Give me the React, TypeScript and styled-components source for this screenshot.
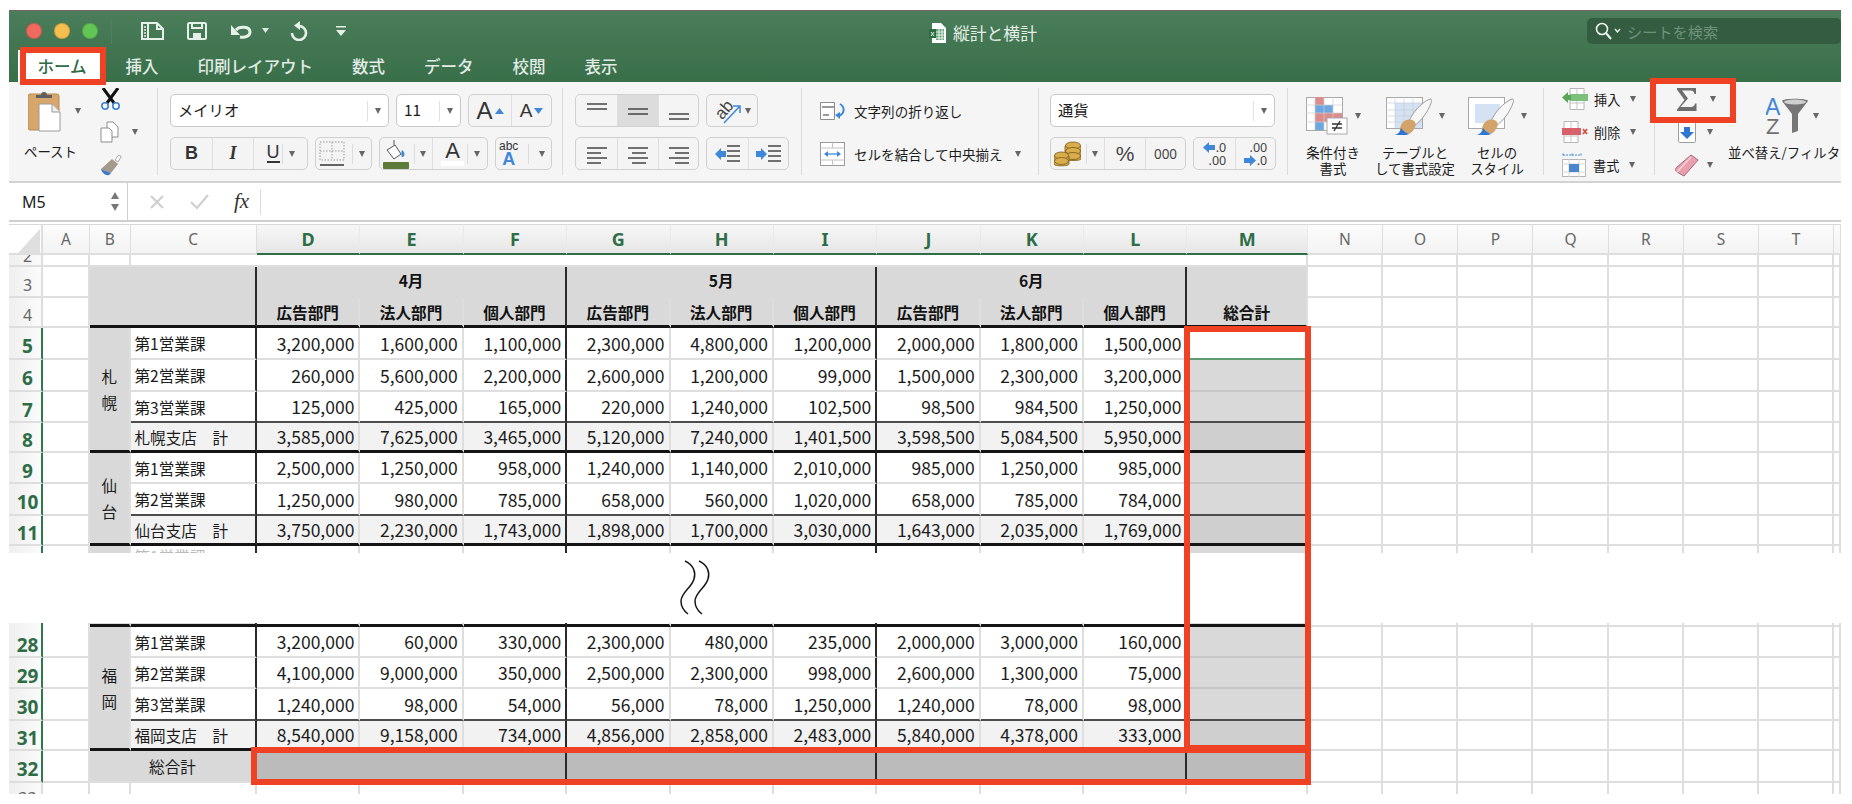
import { Fragment } from 'react';
import styled, { createGlobalStyle } from 'styled-components';

const CJK = `"Noto Sans CJK JP", "Noto Sans", sans-serif`;
const COLS = `34px 47px 40.5px 126.5px repeat(9, 103.39px) 120.5px repeat(7, 75.2px) 1fr`;

const GlobalStyle = createGlobalStyle`
  html, body {
    margin: 0;
    padding: 0;
    background: #fff;
    overflow: hidden;
  }
  * {
    box-sizing: border-box;
  }
`;

const Page = styled.div`
  position: relative;
  width: 1852px;
  height: 804px;
  padding: 10px 11px 0 9px;
  overflow: hidden;
  font-family: ${CJK};
  color: #1c1c1c;
`;

/* title bar + tabs */
const WindowHead = styled.header`
  background: linear-gradient(#4b7d5a, #386f49);
  border-top: 1px solid #7a6262;
`;

const TitleBar = styled.div`
  display: flex;
  align-items: center;
  height: 39px;
  padding-left: 17px;
`;

const Light = styled.span<{ $color: string }>`
  width: 16px;
  height: 16px;
  margin-right: 12px;
  border-radius: 50%;
  background: ${({ $color }) => $color};
  border: 1px solid rgba(0, 0, 0, 0.14);
`;

const QuickSep = styled.span`
  width: 1px;
  height: 26px;
  margin: 0 29px 0 1px;
  background: #4f8160;
`;

const QuickTools = styled.div`
  display: flex;
  align-items: center;
  width: 788px;
  gap: 23px;
`;

const UndoPair = styled.div`
  display: flex;
  align-items: center;
  gap: 10px;
`;

const RedoSlot = styled.span`
  display: flex;
  margin: 0 4px 0 -3px;
`;

const DocTitle = styled.div`
  display: flex;
  align-items: center;
  gap: 7px;
  margin-top: 4px;
  font-size: 16.8px;
  color: #e6eee8;
`;

const SearchBox = styled.div`
  display: flex;
  align-items: center;
  gap: 6px;
  width: 254px;
  height: 26px;
  margin-left: auto;
  padding-left: 8px;
  border-radius: 5px;
  background: #335c41;
  color: #6f927b;
  font-size: 15.2px;
`;

const TabBar = styled.nav`
  display: flex;
  height: 32px;
  padding-left: 9px;
`;

const Tab = styled.div<{ $active?: boolean }>`
  display: flex;
  align-items: center;
  padding: 0 19.5px 1px;
  font-size: 16.5px;
  font-weight: 500;
  white-space: nowrap;
  color: ${({ $active }) => ($active ? '#2f6b45' : '#e2ebe5')};
  background: ${({ $active }) => ($active ? '#fff' : 'transparent')};
`;

/* ribbon */
const Ribbon = styled.section`
  display: flex;
  height: 101px;
  background: #f5f5f5;
  border-bottom: 2px solid #d2d2d2;
`;

const Group = styled.div<{ $w: number; $pl: number }>`
  display: flex;
  flex: none;
  width: ${({ $w }) => $w}px;
  padding-left: ${({ $pl }) => $pl}px;
  overflow: hidden;
`;

const StackGroup = styled(Group)`
  flex-direction: column;
  gap: 10px;
  padding-top: 12px;
`;

const Sep = styled.span`
  flex: none;
  width: 1px;
  height: 87px;
  margin-top: 6px;
  background: #dcdcdc;
`;

const ControlRow = styled.div`
  display: flex;
  gap: 7px;
  height: 33px;
`;

const Caret = styled.span<{ $ml?: number }>`
  flex: none;
  width: 0;
  height: 0;
  margin-left: ${({ $ml }) => $ml ?? 0}px;
  border-left: 3.5px solid transparent;
  border-right: 3.5px solid transparent;
  border-top: 6px solid #666;
`;

const PasteBlock = styled.div`
  display: flex;
  flex-direction: column;
  width: 57px;
  padding-top: 8px;
`;

const PasteTop = styled.div`
  display: flex;
  align-items: center;
  padding-left: 4px;
`;

const ToolLabel = styled.div`
  font-size: 13.4px;
  line-height: 16px;
  white-space: nowrap;
`;

const PasteLabel = styled(ToolLabel)`
  margin-top: 11px;
`;

const SmallTools = styled.div`
  display: flex;
  flex-direction: column;
  gap: 11px;
  margin-left: 19px;
  padding-top: 6px;
`;

const SmallTool = styled.div`
  display: flex;
  align-items: center;
  height: 22px;
`;

const SelectBox = styled.div<{ $w: number }>`
  display: flex;
  align-items: center;
  width: ${({ $w }) => $w}px;
  padding-left: 7px;
  border: 1px solid #c9c9c9;
  border-radius: 5px;
  background: #fff;
  font-size: 15.3px;
`;

const SelectText = styled.span`
  flex: 1;
  padding-bottom: 3px;
  white-space: nowrap;
`;

const SelectArrow = styled.span`
  display: flex;
  align-items: center;
  justify-content: center;
  width: 21px;
  height: 20px;
  border-left: 1px solid #dfdfdf;
`;

const Seg = styled.div`
  display: flex;
  border: 1px solid #d0d0d0;
  border-radius: 5px;
  background: #f4f4f4;
  overflow: hidden;
`;

const Part = styled.div<{ $w: number; $on?: boolean; $first?: boolean }>`
  display: flex;
  align-items: center;
  justify-content: center;
  gap: 2px;
  flex: none;
  width: ${({ $w }) => $w}px;
  border-left: ${({ $first }) => ($first ? 'none' : '1px solid #dedede')};
  background: ${({ $on }) => ($on ? '#dcdcdc' : 'transparent')};
  font-size: 16px;
`;

const Tick = styled.span`
  flex: none;
  width: 1px;
  height: 20px;
  background: #dcdcdc;
`;

const ArrowPart = styled.div<{ $w: number }>`
  display: flex;
  align-items: center;
  justify-content: space-between;
  flex: none;
  width: ${({ $w }) => $w}px;
  padding: 0 6px 0 3px;
`;

const BigA = styled.span<{ $size: number }>`
  font-family: "Liberation Sans", sans-serif;
  font-size: ${({ $size }) => $size}px;
  line-height: 1;
  color: #333;
`;

const BoldGlyph = styled.span`
  font-family: "Liberation Sans", sans-serif;
  font-size: 18px;
  font-weight: 700;
  color: #333;
`;

const ItalicGlyph = styled(BoldGlyph)`
  font-family: "Liberation Serif", serif;
  font-style: italic;
`;

const UnderGlyph = styled(BoldGlyph)`
  font-weight: 400;
  border-bottom: 2px solid #333;
  line-height: 17px;
`;

const ColorA = styled.span`
  display: flex;
  flex-direction: column;
  align-items: center;
  width: 24px;
  font-family: "Liberation Sans", sans-serif;
  font-size: 22px;
  line-height: 20px;
  color: #333;

  &::after {
    content: '';
    width: 23px;
    height: 5px;
    background: #fff;
  }
`;

const AbcStack = styled.span`
  display: flex;
  flex-direction: column;
  align-items: center;
  font-family: "Liberation Sans", sans-serif;
  font-size: 12px;
  line-height: 11px;
  color: #333;

  b {
    font-size: 18px;
    line-height: 15px;
    color: #3f87d8;
  }
`;

const WrapRow = styled.div`
  display: flex;
  align-items: center;
  height: 33px;
  gap: 6px;
  font-size: 13.55px;
  white-space: nowrap;
`;

const MergeRow = styled(WrapRow)`
  gap: 9px;
`;

const Percent = styled.span`
  font-family: "Liberation Sans", sans-serif;
  font-size: 21px;
  color: #444;
`;

const Thousand = styled.span`
  font-family: "Noto Sans", sans-serif;
  font-size: 13.5px;
  color: #444;
`;

const DecStack = styled.span`
  display: flex;
  flex-direction: column;
  align-items: flex-end;
  font-family: "Noto Sans", sans-serif;
  font-size: 12.5px;
  line-height: 13px;
  color: #444;
`;

const DecLine = styled.span`
  display: flex;
  align-items: center;
  gap: 1px;
`;

const StyleGroup = styled(Group)`
  padding-top: 15px;
`;

const StyleItem = styled.div`
  display: flex;
  flex-direction: column;
  align-items: center;
  width: 82px;
`;

const StyleTop = styled.div`
  display: flex;
  align-items: center;
  gap: 7px;
  height: 38px;
  margin-bottom: 9px;
`;

const CenterLabel = styled(ToolLabel)`
  text-align: center;
`;

const CellTools = styled.div`
  display: flex;
  flex-direction: column;
  gap: 11px;
  padding-top: 6px;
`;

const CellTool = styled.div`
  display: flex;
  align-items: center;
  height: 22px;
  font-size: 13.2px;
`;

const CellToolName = styled.span`
  width: 26px;
  margin: 0 10px 0 6px;
  white-space: nowrap;
`;

const EditTools = styled(CellTools)`
  width: 41px;
  flex: none;
`;

const EditIconSlot = styled.span`
  display: flex;
  justify-content: center;
  width: 24px;
  margin-right: 8px;
`;

const SortBlock = styled.div`
  width: 113px;
  margin-left: 12px;
  padding-top: 15px;
  flex: none;
  overflow: hidden;
`;

const SortTop = styled.div`
  display: flex;
  align-items: center;
  gap: 5px;
  height: 38px;
  margin: 0 0 9px 38px;
`;

/* formula bar */
const FormulaBar = styled.div`
  display: flex;
  align-items: center;
  height: 39px;
  margin-bottom: 2px;
  border-bottom: 2px solid #cfcfcf;
  background: #fff;
`;

const NameBox = styled.div`
  display: flex;
  align-items: center;
  justify-content: space-between;
  width: 119px;
  height: 37px;
  padding: 0 8px 0 13px;
  border-right: 1px solid #cfcfcf;
  font-family: "Noto Sans", sans-serif;
  font-size: 16px;
`;

const Stepper = styled.div`
  display: flex;
  flex-direction: column;
  gap: 5px;
`;

const StepUp = styled.span`
  border-left: 4.5px solid transparent;
  border-right: 4.5px solid transparent;
  border-bottom: 7px solid #777;
`;

const StepDown = styled.span`
  border-left: 4.5px solid transparent;
  border-right: 4.5px solid transparent;
  border-top: 7px solid #777;
`;

const FormulaTools = styled.div`
  display: flex;
  align-items: center;
  gap: 25px;
  width: 133px;
  height: 26px;
  padding-left: 21px;
  border-right: 1px solid #dcdcdc;
`;

const FxMark = styled.span`
  font-family: "Liberation Serif", serif;
  font-style: italic;
  font-size: 21px;
  color: #333;
`;

/* sheet */
const ColumnHead = styled.div`
  display: grid;
  grid-template-columns: ${COLS};
  height: 31px;
`;

const Corner = styled.div`
  display: flex;
  align-items: flex-end;
  padding: 0 0 0 9px;
  border-top: 1px solid #d8d8d8;
  border-right: 2px solid #dedede;
  border-bottom: 2px solid #dedede;
`;

const CornerMark = styled.span`
  width: 22px;
  height: 24px;
  background: #dfdfdf;
  clip-path: polygon(100% 0, 100% 100%, 0 100%);
`;

const ColLetter = styled.div<{ $active?: boolean }>`
  display: flex;
  align-items: center;
  justify-content: center;
  overflow: hidden;
  font-family: "Noto Sans", sans-serif;
  font-size: ${({ $active }) => ($active ? '18px' : '15.5px')};
  font-weight: ${({ $active }) => ($active ? 700 : 400)};
  color: ${({ $active }) => ($active ? '#2e6d46' : '#666')};
  background: ${({ $active }) => ($active ? 'linear-gradient(#f7f7f7, #e6e6e6)' : 'linear-gradient(#fcfcfc, #f3f3f3)')};
  border-top: 1px solid #d8d8d8;
  border-right: 1px solid ${({ $active }) => ($active ? '#e9e9e9' : '#dedede')};
  border-bottom: 2px solid ${({ $active }) => ($active ? '#2e6d46' : '#dedede')};
`;

const SheetGrid = styled.div<{ $rows: string }>`
  display: grid;
  grid-template-columns: ${COLS};
  grid-template-rows: ${({ $rows }) => $rows};
`;

type Line = 'grid' | 'soft' | 'thin' | 'thick' | 'select' | 'none';

const lineStyle = (line: Line = 'grid') => {
  switch (line) {
    case 'thick':
      return '3px solid #141414';
    case 'thin':
      return '2px solid #4c4c4c';
    case 'soft':
      return '2px solid #c6c6c6';
    case 'select':
      return '2px solid #5d9c70';
    case 'none':
      return 'none';
    default:
      return '2px solid #dedede';
  }
};

const RowHead = styled.div<{ $active?: boolean; $line?: Line; $clip?: 'top' | 'bottom' }>`
  display: flex;
  align-items: ${({ $clip }) => ($clip === 'bottom' ? 'flex-end' : $clip === 'top' ? 'flex-start' : 'center')};
  justify-content: center;
  overflow: hidden;
  font-family: "Noto Sans", sans-serif;
  font-size: ${({ $active }) => ($active ? '19px' : '16px')};
  font-weight: ${({ $active }) => ($active ? 700 : 400)};
  line-height: 18px;
  padding: ${({ $clip }) => ($clip === 'bottom' ? '0' : '6px')} 0 0 5px;
  color: ${({ $active }) => ($active ? '#2e6d46' : '#666')};
  background: linear-gradient(90deg, #efefef, #fbfbfb);
  border-bottom: ${({ $line }) => lineStyle($line)};
  border-right: 2px solid ${({ $active }) => ($active ? '#2e7a4b' : '#dedede')};
`;

const Cell = styled.div<{
  $fill?: string;
  $line?: Line;
  $edge?: boolean;
  $colSpan?: number;
  $rowSpan?: number;
}>`
  display: flex;
  align-items: center;
  min-width: 0;
  overflow: hidden;
  background: ${({ $fill }) => $fill ?? '#fff'};
  border-bottom: ${({ $line }) => lineStyle($line)};
  border-right: ${({ $edge }) => ($edge ? '2px solid #2a2a2a' : '2px solid #dedede')};
  grid-column: ${({ $colSpan }) => ($colSpan ? `span ${$colSpan}` : 'auto')};
  grid-row: ${({ $rowSpan }) => ($rowSpan ? `span ${$rowSpan}` : 'auto')};
`;

const HeaderCell = styled(Cell)`
  justify-content: center;
  font-size: 15.6px;
  font-weight: 700;
  color: #111;
`;

const MonthCell = styled(HeaderCell)`
  padding-bottom: 6px;
`;

const LabelCell = styled(Cell)`
  padding-left: 4px;
  font-size: 15.6px;
  white-space: pre;
`;

const ClipLabelCell = styled(LabelCell)`
  align-items: flex-start;
  line-height: 20px;
  color: #bbb;
`;

const NumCell = styled(Cell)`
  justify-content: flex-end;
  padding-right: 4px;
  font-size: 17.5px;
  white-space: nowrap;
`;

const RegionCell = styled(Cell)`
  flex-direction: column;
  justify-content: center;
  font-size: 15.6px;
  line-height: 26px;
`;

const TotalLabel = styled(Cell)`
  justify-content: center;
  font-size: 15.6px;
`;

const BreakBand = styled.div`
  height: 70px;
  padding: 6px 0 0 671px;
`;

/* red annotation boxes lying over the app */
const Mark = styled.div`
  position: absolute;
  border: 6px solid #ef4123;
  pointer-events: none;
`;

const HomeMark = styled(Mark)`
  left: 20px;
  top: 47px;
  width: 86px;
  height: 38px;
`;

const SumMark = styled(Mark)`
  left: 1650px;
  top: 78px;
  width: 86px;
  height: 45px;
`;

const TotalColumnMark = styled(Mark)`
  left: 1184px;
  top: 326px;
  width: 127px;
  height: 425px;
`;

const TotalRowMark = styled(Mark)`
  left: 251px;
  top: 747px;
  width: 1060px;
  height: 38px;
`;

/* ---------- icons ---------- */
const SidebarIcon = () => (
  <svg width="23" height="18" viewBox="0 0 23 18" fill="none" stroke="#e8f0ea" strokeWidth="2">
    <path d="M1 1h15l6 6v10H1z" />
    <path d="M7 1v16M16 1v6h6" />
    <path d="M3 5h2M3 8h2M3 11h2M3 14h2" strokeWidth="1.4" />
  </svg>
);

const SaveIcon = () => (
  <svg width="20" height="18" viewBox="0 0 20 18" fill="none" stroke="#e8f0ea" strokeWidth="2">
    <rect x="1" y="1" width="18" height="16" rx="1.5" />
    <path d="M5 1v5h10V1" />
    <path d="M6 17v-6h8v6" fill="#e8f0ea" stroke="none" />
  </svg>
);

const UndoIcon = () => (
  <svg width="22" height="16" viewBox="0 0 22 16" fill="none">
    <path d="M1 2v10h9z" fill="#e8f0ea" />
    <path d="M6 7c3-4 14-4 14 2 0 4-5 6-10 5" stroke="#e8f0ea" strokeWidth="3" />
  </svg>
);

const RedoIcon = () => (
  <svg width="19" height="20" viewBox="0 0 19 20" fill="none">
    <path d="M10 5a7 7 0 1 1-7 7" stroke="#e8f0ea" strokeWidth="2.6" />
    <path d="M11 0v9L5 4.500z" fill="#e8f0ea" />
  </svg>
);

const CustomizeIcon = () => (
  <svg width="12" height="12" viewBox="0 0 12 12">
    <path d="M1 1h10v1.6H1zM1 5h10L6 11z" fill="#e8f0ea" />
  </svg>
);

const MiniCaret = () => (
  <svg width="7" height="5" viewBox="0 0 7 5">
    <path d="M0 0h7L3.5 5z" fill="#dfe9e2" />
  </svg>
);

const FileIcon = () => (
  <svg width="17" height="20" viewBox="0 0 17 20">
    <path d="M3 0h9l5 5v15H3z" fill="#fff" />
    <path d="M7 6h8v11H7z" fill="#6aa37d" />
    <path d="M7 9h8M7 12h8M7 15h8M10 6v11M13 6v11" stroke="#fff" strokeWidth=".8" />
    <rect x="0" y="6" width="7" height="9" fill="#2d6b44" />
    <path d="M2 9l3 4M5 9l-3 4" stroke="#fff" strokeWidth=".9" />
  </svg>
);

const SearchIcon = () => (
  <svg width="26" height="18" viewBox="0 0 26 18" fill="none" stroke="#f0f5f1">
    <circle cx="7" cy="7" r="5.5" strokeWidth="1.6" />
    <path d="M11 11l5 6" strokeWidth="2" />
    <path d="M20 7l2.5 3L25 7" strokeWidth="1.4" />
  </svg>
);

const ClipboardIcon = () => (
  <svg width="33" height="42" viewBox="0 0 33 42">
    <rect x="0" y="4" width="31" height="36" rx="2" fill="#d7a66b" stroke="#b78d5b" />
    <path d="M8 8V5h5a3 3 0 0 1 6 0h5v3z" fill="#5f5f5f" />
    <path d="M11 14h13l8 8v19H11z" fill="#fff" stroke="#9a9a9a" />
    <path d="M24 14v8h8" fill="#eee" stroke="#9a9a9a" />
  </svg>
);

const ScissorsIcon = () => (
  <svg width="21" height="22" viewBox="0 0 21 22" fill="none">
    <path d="M3 0l11 15M18 0L7 15" stroke="#111" strokeWidth="3" />
    <circle cx="5" cy="18" r="3.2" stroke="#3b7fd1" strokeWidth="1.6" />
    <circle cx="16" cy="18" r="3.2" stroke="#3b7fd1" strokeWidth="1.6" />
  </svg>
);

const CopyIcon = () => (
  <svg width="19" height="22" viewBox="0 0 19 22" fill="#fff" stroke="#8d8d8d">
    <path d="M7 1h6l5 5v10H7z" />
    <path d="M1 7h8l3 3v11H1z" />
  </svg>
);

const FormatBrushIcon = () => (
  <svg width="23" height="22" viewBox="0 0 23 22">
    <path d="M15 6l3-4c1-1.400 3-.4 3 1l-3 5z" fill="#fff" stroke="#a5a5a5" />
    <path d="M1 15L12 5l6 5-7 9z" fill="#a39a8c" />
    <path d="M1 15l10 4-2 2c-3 1-7-2-8-6z" fill="#3f78c4" />
  </svg>
);

const BorderIcon = () => (
  <svg width="26" height="26" viewBox="0 0 26 26" fill="none" stroke="#9c9c9c">
    <path d="M1 1h24v18H1zM13 1v18M1 10h24" strokeDasharray="1.5 1.5" />
    <path d="M1 24h24" stroke="#333" strokeWidth="1.6" />
  </svg>
);

const FillIcon = () => (
  <svg width="26" height="30" viewBox="0 0 26 30">
    <path d="M4 11l8-5 6 9-7 5z" fill="#fff" stroke="#555" />
    <path d="M11 6V1" stroke="#555" fill="none" />
    <path d="M19 11c3 2 3 6 1 7s-2-4-1-7z" fill="#3f87d8" />
    <rect x="0" y="23" width="26" height="7" rx="1" fill="#5d7a3a" />
  </svg>
);

const AlignLines = ({ kind }: { kind: 'top' | 'mid' | 'low' }) => {
  const y = kind === 'top' ? 3 : kind === 'mid' ? 8 : 13;
  return (
    <svg width="22" height="20" viewBox="0 0 22 20" stroke="#444" strokeWidth="1.6">
      <path d={`M1 ${y}h20M1 ${y + 5}h20`} />
    </svg>
  );
};

const TextLines = ({ kind }: { kind: 'left' | 'center' | 'right' }) => {
  const start = kind === 'left' ? 1 : kind === 'center' ? 5 : 7;
  return (
    <svg width="22" height="20" viewBox="0 0 22 20" stroke="#444" strokeWidth="1.5">
      <path d={`M1 4h20M${start} 9h14M1 14h20M${start} 19h14`} />
    </svg>
  );
};

const OrientIcon = () => (
  <svg width="30" height="29" viewBox="0 0 30 29">
    <text x="1" y="19" fontFamily="Liberation Sans" fontSize="17" fill="#444" transform="rotate(-50 11 13)">
      ab
    </text>
    <path d="M11 27L26 11M20 10h7v7" fill="none" stroke="#3f87d8" strokeWidth="1.5" />
  </svg>
);

const IndentIcon = ({ out }: { out?: boolean }) => (
  <svg width="26" height="20" viewBox="0 0 26 20">
    <path d="M12 2h13M12 7h13M12 12h13M12 17h13" stroke="#444" strokeWidth="1.5" />
    <path d={out ? 'M0 10l6-6v3h5v6H6v3z' : 'M11 10L5 4v3H0v6h5v3z'} fill="#3f87d8" />
  </svg>
);

const WrapIcon = () => (
  <svg width="28" height="18" viewBox="0 0 28 18" fill="none">
    <path d="M.5 .5h14v17H.5z" fill="#fff" stroke="#8d8d8d" />
    <path d="M2 5h12M3 13h6" stroke="#333" strokeWidth="1.2" />
    <path d="M20 2c5 3 5 9-1 12" stroke="#3f87d8" strokeWidth="2" />
    <path d="M15 13l5-3v7z" fill="#3f87d8" />
  </svg>
);

const MergeIcon = () => (
  <svg width="25" height="24" viewBox="0 0 25 24" fill="none">
    <rect x=".5" y=".5" width="24" height="23" fill="#fff" stroke="#9a9a9a" />
    <path d="M.5 6h24M.5 18h24M12.500 .5V6M12.500 18v5.500" stroke="#c2c2c2" />
    <path d="M6 12h13" stroke="#3f87d8" strokeWidth="1.3" />
    <path d="M4 12l4-3v6zM21 12l-4-3v6z" fill="#3f87d8" />
  </svg>
);

const CoinsIcon = () => (
  <svg width="27" height="26" viewBox="0 0 27 26" stroke="#7a5a1c" strokeWidth=".8" fill="#d9ad4c">
    <path d="M11 5v13c0 2 16 2 16 0V5z" />
    <ellipse cx="19" cy="4.5" rx="7.5" ry="3.5" />
    <ellipse cx="19" cy="10" rx="7.5" ry="3.5" />
    <ellipse cx="19" cy="15" rx="7.5" ry="3.5" />
    <path d="M0 15v8c0 2.500 15 2.500 15 0v-8z" />
    <ellipse cx="7.5" cy="14.5" rx="7" ry="3.5" />
    <ellipse cx="7.5" cy="20" rx="7" ry="3.5" />
  </svg>
);

const BlueArrow = ({ right }: { right?: boolean }) => (
  <svg width="12" height="11" viewBox="0 0 12 11">
    <path d={right ? 'M12 5.5L6 0v3H0v5h6v3z' : 'M0 5.5L6 0v3h6v5H6v3z'} fill="#3f87d8" />
  </svg>
);

const ConditionIcon = () => (
  <svg width="42" height="38" viewBox="0 0 42 38" fill="none">
    <rect x=".5" y=".5" width="36" height="33" fill="#fff" stroke="#a8a8a8" />
    <path d="M9 0h9v8H9z" fill="#dd8c8c" />
    <path d="M9 8h18v8H9z" fill="#6ea6e2" />
    <path d="M9 16h27v9H9z" fill="#dd8c8c" />
    <path d="M9 25h9v8H9z" fill="#6ea6e2" />
    <path d="M0 8h36M0 16h36M0 25h36M9 0v33M18 0v33M27 0v33" stroke="#cfcfcf" strokeWidth=".7" />
    <rect x="21" y="21" width="20" height="16" fill="#fff" stroke="#a8a8a8" />
    <path d="M26 27h10M26 31h10M34 24l-6 10" stroke="#333" strokeWidth="1.3" />
  </svg>
);

const PaintBrush = () => (
  <g>
    <path d="M23 24C27 15 36 5 44 2c2 0 2 2 1 4-3 9-10 18-17 23z" fill="#f7f7f7" stroke="#9d9d9d" />
    <path d="M14 33c0-7 6-12 12-10 4 1 5 5 2 9-1 2-3 4-5 5z" fill="#d2a36a" />
    <path d="M9 38c3-1 5-3 6-7 2 3 5 5 8 6-4 2-10 2-14 1z" fill="#2f76d2" />
  </g>
);

const TableStyleIcon = () => (
  <svg width="46" height="38" viewBox="0 0 46 38" fill="none">
    <rect x=".5" y=".5" width="36" height="31" fill="#fff" stroke="#a8a8a8" />
    <rect x="9" y="6" width="27" height="25" fill="#d4e2f3" />
    <path d="M0 6h36M0 13h36M0 19h36M0 25h36M9 0v31M18 0v31M27 0v31" stroke="#c6cfd9" strokeWidth=".7" />
    <PaintBrush />
  </svg>
);

const CellStyleIcon = () => (
  <svg width="46" height="38" viewBox="0 0 46 38" fill="none">
    <rect x=".5" y=".5" width="36" height="31" fill="#fff" stroke="#a8a8a8" />
    <rect x="7" y="7" width="25" height="19" fill="#d4e2f3" />
    <PaintBrush />
  </svg>
);

const InsertIcon = () => (
  <svg width="26" height="22" viewBox="0 0 26 22" fill="none">
    <path d="M8 .5h14v21H8z" fill="#fff" stroke="#b4b4b4" />
    <path d="M15 0v22M8 15h14" stroke="#c6c6c6" />
    <rect x="8" y="6" width="18" height="7" fill="#7cc07c" />
    <path d="M0 9.500L6 4v3h3v5H6v3z" fill="#5aa75a" />
  </svg>
);

const DeleteIcon = () => (
  <svg width="26" height="22" viewBox="0 0 26 22" fill="none">
    <path d="M2 .5h14v21H2z" fill="#fff" stroke="#b4b4b4" />
    <path d="M9 0v22M2 15h14" stroke="#c6c6c6" />
    <rect x="0" y="7" width="19" height="7" fill="#d8606a" />
    <path d="M21 8l4 5M25 8l-4 5" stroke="#d8503f" strokeWidth="1.8" />
  </svg>
);

const FormatIcon = () => (
  <svg width="25" height="24" viewBox="0 0 25 24" fill="none">
    <path d="M1 2h18M1 .5v3M19 .5v3M10 .5v3" stroke="#3f87d8" strokeWidth="1" strokeDasharray="2 1" />
    <rect x=".5" y="6.500" width="23" height="17" fill="#fff" stroke="#b4b4b4" />
    <path d="M0 11h24M0 19h24M7 6v18M17 6v18" stroke="#d4d4d4" />
    <rect x="7" y="11" width="10" height="8" fill="#4a86cf" />
  </svg>
);

const SumIcon = () => (
  <svg width="20" height="23" viewBox="0 0 20 23">
    <path d="M0 0h19v6h-1.500c-.5-2-1.500-3.500-4-3.500H5L11 10.500 3.500 19H14c2.500 0 3.500-1.500 4-3.500h1.500V23H0v-1.500L7.500 12 0 1.500z" fill="#6e6e6e" />
  </svg>
);

const FillDownIcon = () => (
  <svg width="18" height="21" viewBox="0 0 18 21">
    <rect x=".5" y=".5" width="17" height="20" rx="1" fill="#fff" stroke="#9c9c9c" />
    <path d="M6 5h6v5h4l-7 7-7-7h4z" fill="#2f76d2" />
  </svg>
);

const EraserIcon = () => (
  <svg width="24" height="23" viewBox="0 0 24 23">
    <path d="M16 1l7 5L9 22l-7-4c-2-2-2-3 0-5z" fill="#e8a0ae" stroke="#a96478" />
    <path d="M2 18l14-15" stroke="#f6d2d9" strokeWidth="1.5" />
  </svg>
);

const SortIcon = () => (
  <svg width="42" height="36" viewBox="0 0 42 36">
    <text x="-1" y="17" fontFamily="Liberation Sans" fontSize="23" fill="#3f87d8">
      A
    </text>
    <text x="0" y="36" fontFamily="Liberation Sans" fontSize="22" fill="#707070">
      Z
    </text>
    <path d="M16 3c0-3 26-3 26 0L32 16v17l-6 2V16z" fill="#767676" />
    <ellipse cx="29" cy="4" rx="11" ry="2.500" fill="#cfcfcf" />
  </svg>
);

const BreakSquiggle = () => (
  <svg width="32" height="58" viewBox="0 0 32 58" fill="none" stroke="#161616" strokeWidth="1.5">
    <path d="M5 2c9 4 11 12 9 18-2 8-13 14-13 22 0 6 3 10 7 13" />
    <path d="M19 2c9 4 11 12 9 18-2 8-13 14-13 22 0 6 3 10 7 13" />
  </svg>
);

const XMark = () => (
  <svg width="16" height="16" viewBox="0 0 16 16" stroke="#cfcfcf" strokeWidth="2.2">
    <path d="M2 2l12 12M14 2L2 14" />
  </svg>
);

const CheckMark = () => (
  <svg width="19" height="16" viewBox="0 0 19 16" fill="none" stroke="#cfcfcf" strokeWidth="2.2">
    <path d="M1 8l6 6L18 1" />
  </svg>
);

/* ---------- data ---------- */
const COLUMN_LETTERS = 'A B C D E F G H I J K L M N O P Q R S T'.split(' ');
const ACTIVE_COLUMNS = 'DEFGHIJKLM';
const MONTHS = ['4月', '5月', '6月'];
const DEPARTMENTS = ['広告部門', '法人部門', '個人部門'];

type DataRow = {
  no: number;
  label: string;
  values: string[];
  subtotal?: boolean;
  line: Line;
  region?: string[];
  selected?: boolean;
};

const TOP_ROWS: DataRow[] = [
  {
    no: 5,
    label: '第1営業課',
    region: ['札', '幌'],
    selected: true,
    line: 'grid',
    values: ['3,200,000', '1,600,000', '1,100,000', '2,300,000', '4,800,000', '1,200,000', '2,000,000', '1,800,000', '1,500,000'],
  },
  {
    no: 6,
    label: '第2営業課',
    line: 'grid',
    values: ['260,000', '5,600,000', '2,200,000', '2,600,000', '1,200,000', '99,000', '1,500,000', '2,300,000', '3,200,000'],
  },
  {
    no: 7,
    label: '第3営業課',
    line: 'thin',
    values: ['125,000', '425,000', '165,000', '220,000', '1,240,000', '102,500', '98,500', '984,500', '1,250,000'],
  },
  {
    no: 8,
    label: '札幌支店　計',
    subtotal: true,
    line: 'thick',
    values: ['3,585,000', '7,625,000', '3,465,000', '5,120,000', '7,240,000', '1,401,500', '3,598,500', '5,084,500', '5,950,000'],
  },
  {
    no: 9,
    label: '第1営業課',
    region: ['仙', '台'],
    line: 'grid',
    values: ['2,500,000', '1,250,000', '958,000', '1,240,000', '1,140,000', '2,010,000', '985,000', '1,250,000', '985,000'],
  },
  {
    no: 10,
    label: '第2営業課',
    line: 'thin',
    values: ['1,250,000', '980,000', '785,000', '658,000', '560,000', '1,020,000', '658,000', '785,000', '784,000'],
  },
  {
    no: 11,
    label: '仙台支店　計',
    subtotal: true,
    line: 'thick',
    values: ['3,750,000', '2,230,000', '1,743,000', '1,898,000', '1,700,000', '3,030,000', '1,643,000', '2,035,000', '1,769,000'],
  },
];

const BOTTOM_ROWS: DataRow[] = [
  {
    no: 28,
    label: '第1営業課',
    region: ['福', '岡'],
    line: 'grid',
    values: ['3,200,000', '60,000', '330,000', '2,300,000', '480,000', '235,000', '2,000,000', '3,000,000', '160,000'],
  },
  {
    no: 29,
    label: '第2営業課',
    line: 'grid',
    values: ['4,100,000', '9,000,000', '350,000', '2,500,000', '2,300,000', '998,000', '2,600,000', '1,300,000', '75,000'],
  },
  {
    no: 30,
    label: '第3営業課',
    line: 'thin',
    values: ['1,240,000', '98,000', '54,000', '56,000', '78,000', '1,250,000', '1,240,000', '78,000', '98,000'],
  },
  {
    no: 31,
    label: '福岡支店　計',
    subtotal: true,
    line: 'thick',
    values: ['8,540,000', '9,158,000', '734,000', '4,856,000', '2,858,000', '2,483,000', '5,840,000', '4,378,000', '333,000'],
  },
];

const HEADER_GRAY = '#d9d9d9';
const SUBTOTAL = '#f2f2f2';

const BlankCells = ({ count = 8, line }: { count?: number; line?: Line }) => (
  <>
    {Array.from({ length: count }, (_, i) => (
      <Cell key={i} $line={line} />
    ))}
  </>
);

const SheetRow = ({ row, regionSpan }: { row: DataRow; regionSpan: number }) => {
  const fill = row.subtotal ? SUBTOTAL : undefined;
  const totalFill = row.selected ? '#fff' : row.subtotal ? '#cfcfcf' : HEADER_GRAY;
  const totalLine: Line = row.selected ? 'select' : row.line === 'grid' ? 'soft' : row.line;
  return (
    <>
      <RowHead $active>{row.no}</RowHead>
      <Cell />
      {row.region && (
        <RegionCell $fill={HEADER_GRAY} $rowSpan={regionSpan} $line="thick" $edge={false}>
          {row.region.map((c) => (
            <span key={c}>{c}</span>
          ))}
        </RegionCell>
      )}
      <LabelCell $fill={fill} $line={row.line} $edge>
        {row.label}
      </LabelCell>
      {row.values.map((v, i) => (
        <NumCell key={i} $fill={fill} $line={row.line} $edge={i % 3 === 2}>
          {v}
        </NumCell>
      ))}
      <Cell $fill={totalFill} $line={totalLine} />
      <BlankCells />
    </>
  );
};

const ValueStrip = ({ line }: { line?: Line }) => (
  <>
    {Array.from({ length: 9 }, (_, i) => (
      <Cell key={i} $line={line} $edge={i % 3 === 2} />
    ))}
  </>
);

export default function App() {
  return (
    <Page>
      <GlobalStyle />
      <WindowHead>
        <TitleBar>
          <Light $color="#ee6a5f" />
          <Light $color="#f6be4f" />
          <Light $color="#62c654" />
          <QuickSep />
          <QuickTools>
            <SidebarIcon />
            <SaveIcon />
            <UndoPair>
              <UndoIcon />
              <MiniCaret />
            </UndoPair>
            <RedoSlot>
              <RedoIcon />
            </RedoSlot>
            <CustomizeIcon />
          </QuickTools>
          <DocTitle>
            <FileIcon />
            縦計と横計
          </DocTitle>
          <SearchBox>
            <SearchIcon />
            シートを検索
          </SearchBox>
        </TitleBar>
        <TabBar>
          <Tab $active>ホーム</Tab>
          <Tab>挿入</Tab>
          <Tab>印刷レイアウト</Tab>
          <Tab>数式</Tab>
          <Tab>データ</Tab>
          <Tab>校閲</Tab>
          <Tab>表示</Tab>
        </TabBar>
      </WindowHead>

      <Ribbon>
        <Group $w={148} $pl={15}>
          <PasteBlock>
            <PasteTop>
              <ClipboardIcon />
              <Caret $ml={14} />
            </PasteTop>
            <PasteLabel>ペースト</PasteLabel>
          </PasteBlock>
          <SmallTools>
            <SmallTool>
              <ScissorsIcon />
            </SmallTool>
            <SmallTool>
              <CopyIcon />
              <Caret $ml={13} />
            </SmallTool>
            <SmallTool>
              <FormatBrushIcon />
            </SmallTool>
          </SmallTools>
        </Group>
        <Sep />

        <StackGroup $w={404} $pl={12}>
          <ControlRow>
            <SelectBox $w={219}>
              <SelectText>メイリオ</SelectText>
              <SelectArrow>
                <Caret />
              </SelectArrow>
            </SelectBox>
            <SelectBox $w={65}>
              <SelectText>11</SelectText>
              <SelectArrow>
                <Caret />
              </SelectArrow>
            </SelectBox>
            <Seg>
              <Part $w={42} $first>
                <BigA $size={24}>A</BigA>
                <svg width="9" height="6" viewBox="0 0 9 6">
                  <path d="M0 6l4.5-6L9 6z" fill="#3f87d8" />
                </svg>
              </Part>
              <Part $w={40}>
                <BigA $size={19}>A</BigA>
                <svg width="9" height="6" viewBox="0 0 9 6">
                  <path d="M0 0h9L4.5 6z" fill="#3f87d8" />
                </svg>
              </Part>
            </Seg>
          </ControlRow>
          <ControlRow>
            <Seg>
              <Part $w={41} $first>
                <BoldGlyph>B</BoldGlyph>
              </Part>
              <Part $w={41}>
                <ItalicGlyph>I</ItalicGlyph>
              </Part>
              <Part $w={54}>
                <UnderGlyph>U</UnderGlyph>
                <Tick />
                <Caret $ml={4} />
              </Part>
            </Seg>
            <Seg>
              <ArrowPart $w={55}>
                <BorderIcon />
                <Tick />
                <Caret />
              </ArrowPart>
            </Seg>
            <Seg>
              <ArrowPart $w={52}>
                <FillIcon />
                <Tick />
                <Caret />
              </ArrowPart>
              <Part $w={55}>
                <ColorA>A</ColorA>
                <Tick />
                <Caret $ml={4} />
              </Part>
            </Seg>
            <Seg>
              <ArrowPart $w={55}>
                <AbcStack>
                  abc
                  <b>A</b>
                </AbcStack>
                <Tick />
                <Caret />
              </ArrowPart>
            </Seg>
          </ControlRow>
        </StackGroup>
        <Sep />

        <StackGroup $w={238} $pl={12}>
          <ControlRow>
            <Seg>
              <Part $w={41} $first>
                <AlignLines kind="top" />
              </Part>
              <Part $w={41} $on>
                <AlignLines kind="mid" />
              </Part>
              <Part $w={40}>
                <AlignLines kind="low" />
              </Part>
            </Seg>
            <Seg>
              <Part $w={50} $first>
                <OrientIcon />
                <Caret />
              </Part>
            </Seg>
          </ControlRow>
          <ControlRow>
            <Seg>
              <Part $w={41} $first>
                <TextLines kind="left" />
              </Part>
              <Part $w={41}>
                <TextLines kind="center" />
              </Part>
              <Part $w={40}>
                <TextLines kind="right" />
              </Part>
            </Seg>
            <Seg>
              <Part $w={41} $first>
                <IndentIcon out />
              </Part>
              <Part $w={40}>
                <IndentIcon />
              </Part>
            </Seg>
          </ControlRow>
        </StackGroup>
        <Sep />

        <StackGroup $w={236} $pl={18}>
          <WrapRow>
            <WrapIcon />
            文字列の折り返し
          </WrapRow>
          <MergeRow>
            <MergeIcon />
            <span>セルを結合して中央揃え</span>
            <Caret $ml={3} />
          </MergeRow>
        </StackGroup>
        <Sep />

        <StackGroup $w={248} $pl={11}>
          <ControlRow>
            <SelectBox $w={225}>
              <SelectText>通貨</SelectText>
              <SelectArrow>
                <Caret />
              </SelectArrow>
            </SelectBox>
          </ControlRow>
          <ControlRow>
            <Seg>
              <ArrowPart $w={53}>
                <CoinsIcon />
                <Tick />
                <Caret />
              </ArrowPart>
              <Part $w={41}>
                <Percent>%</Percent>
              </Part>
              <Part $w={40}>
                <Thousand>000</Thousand>
              </Part>
            </Seg>
            <Seg>
              <Part $w={41} $first>
                <DecStack>
                  <DecLine>
                    <BlueArrow />
                    .0
                  </DecLine>
                  <span>.00</span>
                </DecStack>
              </Part>
              <Part $w={40}>
                <DecStack>
                  <span>.00</span>
                  <DecLine>
                    <BlueArrow right />
                    .0
                  </DecLine>
                </DecStack>
              </Part>
            </Seg>
          </ControlRow>
        </StackGroup>
        <Sep />

        <StyleGroup $w={255} $pl={4}>
          <StyleItem>
            <StyleTop>
              <ConditionIcon />
              <Caret />
            </StyleTop>
            <CenterLabel>
              条件付き
              <br />
              書式
            </CenterLabel>
          </StyleItem>
          <StyleItem>
            <StyleTop>
              <TableStyleIcon />
              <Caret />
            </StyleTop>
            <CenterLabel>
              テーブルと
              <br />
              して書式設定
            </CenterLabel>
          </StyleItem>
          <StyleItem>
            <StyleTop>
              <CellStyleIcon />
              <Caret />
            </StyleTop>
            <CenterLabel>
              セルの
              <br />
              スタイル
            </CenterLabel>
          </StyleItem>
        </StyleGroup>
        <Sep />

        <Group $w={110} $pl={18}>
          <CellTools>
            <CellTool>
              <InsertIcon />
              <CellToolName>挿入</CellToolName>
              <Caret />
            </CellTool>
            <CellTool>
              <DeleteIcon />
              <CellToolName>削除</CellToolName>
              <Caret />
            </CellTool>
            <CellTool>
              <FormatIcon />
              <CellToolName>書式</CellToolName>
              <Caret />
            </CellTool>
          </CellTools>
        </Group>
        <Sep />

        <Group $w={186} $pl={20}>
          <EditTools>
            <CellTool>
              <EditIconSlot>
                <SumIcon />
              </EditIconSlot>
              <Caret $ml={4} />
            </CellTool>
            <CellTool>
              <EditIconSlot>
                <FillDownIcon />
              </EditIconSlot>
              <Caret />
            </CellTool>
            <CellTool>
              <EditIconSlot>
                <EraserIcon />
              </EditIconSlot>
              <Caret />
            </CellTool>
          </EditTools>
          <SortBlock>
            <SortTop>
              <SortIcon />
              <Caret />
            </SortTop>
            <ToolLabel>並べ替え/フィルタ</ToolLabel>
          </SortBlock>
        </Group>
      </Ribbon>

      <FormulaBar>
        <NameBox>
          M5
          <Stepper>
            <StepUp />
            <StepDown />
          </Stepper>
        </NameBox>
        <FormulaTools>
          <XMark />
          <CheckMark />
          <FxMark>fx</FxMark>
        </FormulaTools>
      </FormulaBar>

      <ColumnHead>
        <Corner>
          <CornerMark />
        </Corner>
        {COLUMN_LETTERS.map((c) => (
          <ColLetter key={c} $active={ACTIVE_COLUMNS.includes(c)}>
            {c}
          </ColLetter>
        ))}
        <ColLetter />
      </ColumnHead>

      <SheetGrid $rows="12px 31px 30px 32px 32px 31px 30px 31px 32px 30px 7px">
        {/* row 2, cut by the scroll position */}
        <RowHead $clip="bottom">2</RowHead>
        <BlankCells count={2} />
        <Cell $colSpan={11} />
        <BlankCells />

        {/* rows 3-4 */}
        <RowHead>3</RowHead>
        <Cell />
        <HeaderCell $fill={HEADER_GRAY} $colSpan={2} $rowSpan={2} $line="thick" $edge />
        {MONTHS.map((m) => (
          <MonthCell key={m} $fill={HEADER_GRAY} $colSpan={3} $line="none" $edge>
            {m}
          </MonthCell>
        ))}
        <HeaderCell $fill={HEADER_GRAY} $line="none" />
        <BlankCells />

        <RowHead>4</RowHead>
        <Cell />
        {MONTHS.map((m) =>
          DEPARTMENTS.map((d, i) => (
            <HeaderCell key={m + d} $fill={HEADER_GRAY} $line="thick" $edge={i === 2}>
              {d}
            </HeaderCell>
          )),
        )}
        <HeaderCell $fill={HEADER_GRAY} $line="thick">
          総合計
        </HeaderCell>
        <BlankCells />

        {TOP_ROWS.map((row) => (
          <Fragment key={row.no}>
            <SheetRow row={row} regionSpan={row.no === 5 ? 4 : 3} />
          </Fragment>
        ))}

        {/* row 12, cut off by the torn edge */}
        <RowHead $active $line="none" />
        <Cell $line="none" />
        <Cell $fill={HEADER_GRAY} $line="none" />
        <ClipLabelCell $line="none" $edge>
          第1営業課
        </ClipLabelCell>
        <ValueStrip line="none" />
        <Cell $fill={HEADER_GRAY} $line="none" />
        <BlankCells line="none" />
      </SheetGrid>

      <BreakBand>
        <BreakSquiggle />
      </BreakBand>

      <SheetGrid $rows="4px 31px 31px 32px 30px 32px 11px">
        {/* row 27, the end of the cut */}
        <RowHead $active $line="none" />
        <Cell $line="none" />
        <Cell $fill={HEADER_GRAY} $line="thick" />
        <Cell $fill={HEADER_GRAY} $line="thick" $edge />
        <ValueStrip line="thick" />
        <Cell $fill={HEADER_GRAY} $line="thick" />
        <BlankCells />

        {BOTTOM_ROWS.map((row) => (
          <Fragment key={row.no}>
            <SheetRow row={row} regionSpan={4} />
          </Fragment>
        ))}

        <RowHead $active>32</RowHead>
        <Cell />
        <TotalLabel $fill={HEADER_GRAY} $colSpan={2} $edge>
          総合計
        </TotalLabel>
        {MONTHS.map((m) => (
          <Cell key={m} $fill="#bbbbbb" $colSpan={3} $edge />
        ))}
        <Cell $fill="#bbbbbb" />
        <BlankCells />

        {/* row 33, cut at the bottom */}
        <RowHead $clip="top" $line="none">
          33
        </RowHead>
        <BlankCells count={21} line="none" />
      </SheetGrid>

      <HomeMark />
      <SumMark />
      <TotalColumnMark />
      <TotalRowMark />
    </Page>
  );
}
